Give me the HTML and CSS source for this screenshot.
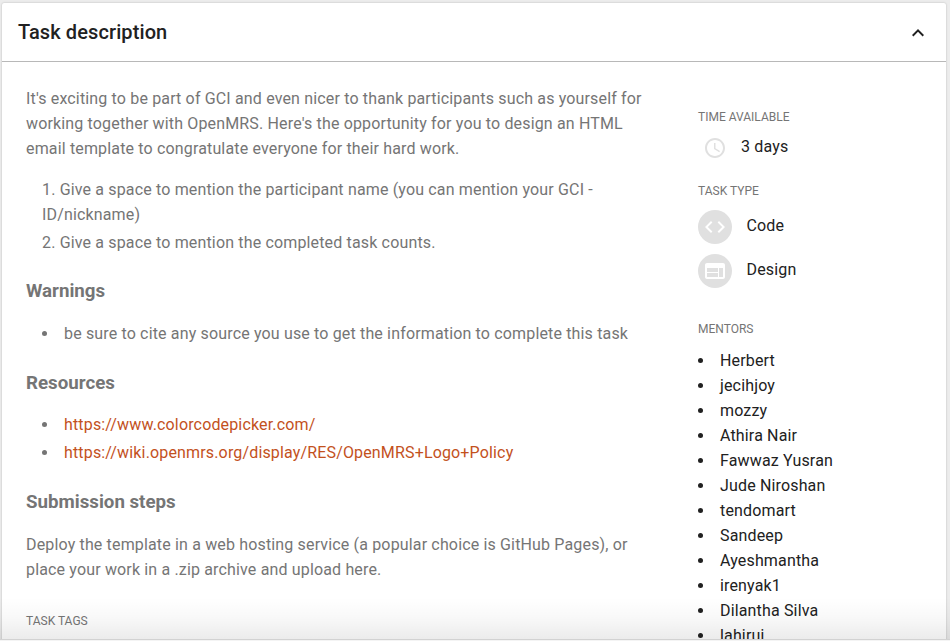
FILE: index.html
```html
<!DOCTYPE html>
<html lang="en">
<head>
<meta charset="utf-8">
<title>Task description</title>
<link rel="stylesheet" href="styles.css">
</head>
<body>
<section class="card">
  <header class="card-header">
    <h1>Task description</h1>
    <svg class="chevron" viewBox="0 0 24 24"><path d="M12 8l-6 6 1.41 1.41L12 10.83l4.59 4.58L18 14z"/></svg>
  </header>
  <div class="card-body">
    <main class="description">
      <p class="intro">It's exciting to be part of GCI and even nicer to thank participants such as yourself for<br>working together with OpenMRS. Here's the opportunity for you to design an HTML<br>email template to congratulate everyone for their hard work.</p>
      <ol class="steps">
        <li>Give a space to mention the participant name (you can mention your GCI -<br>ID/nickname)</li>
        <li>Give a space to mention the completed task counts.</li>
      </ol>
      <h2>Warnings</h2>
      <ul class="bullets">
        <li>be sure to cite any source you use to get the information to complete this task</li>
      </ul>
      <h2 class="resources">Resources</h2>
      <ul class="bullets">
        <li><a href="#">https://www.colorcodepicker.com/</a></li>
        <li><a href="#">https://wiki.openmrs.org/display/RES/OpenMRS+Logo+Policy</a></li>
      </ul>
      <h2 class="submission">Submission steps</h2>
      <p>Deploy the template in a web hosting service (a popular choice is GitHub Pages), or<br>place your work in a .zip archive and upload here.</p>
      <h3 class="label tags">TASK TAGS</h3>
    </main>
    <aside class="details">
      <h3 class="label">TIME AVAILABLE</h3>
      <div class="time">
        <svg class="clock" viewBox="0 0 24 24"><path d="M11.99 2C6.47 2 2 6.48 2 12s4.47 10 9.99 10C17.52 22 22 17.52 22 12S17.52 2 11.99 2zM12 20c-4.42 0-8-3.58-8-8s3.58-8 8-8 8 3.58 8 8-3.58 8-8 8zM12.5 7H11v6l5.25 3.15.75-1.23-4.5-2.67z"/></svg>
        <span class="name">3 days</span>
      </div>
      <h3 class="label">TASK TYPE</h3>
      <div class="type">
        <span class="badge"><svg viewBox="0 0 24 24"><path d="M9.4 16.6L4.8 12l4.6-4.6L8 6l-6 6 6 6 1.4-1.4zm5.2 0l4.6-4.6-4.6-4.6L16 6l6 6-6 6-1.4-1.4z"/></svg></span>
        <span class="name">Code</span>
      </div>
      <div class="type">
        <span class="badge"><svg viewBox="0 0 24 24"><path d="M20 4H4c-1.1 0-1.99.9-1.99 2L2 18c0 1.1.9 2 2 2h16c1.1 0 2-.9 2-2V6c0-1.1-.9-2-2-2zm-5 14H4v-4h11v4zm0-5H4V9h11v4zm5 5h-4V9h4v9z"/></svg></span>
        <span class="name">Design</span>
      </div>
      <h3 class="label mentors-label">MENTORS</h3>
      <ul class="mentors">
        <li>Herbert</li>
        <li>jecihjoy</li>
        <li>mozzy</li>
        <li>Athira Nair</li>
        <li>Fawwaz Yusran</li>
        <li>Jude Niroshan</li>
        <li>tendomart</li>
        <li>Sandeep</li>
        <li>Ayeshmantha</li>
        <li>irenyak1</li>
        <li>Dilantha Silva</li>
        <li>lahiruj</li>
      </ul>
    </aside>
  </div>
</section>
<div class="fade"></div>
</body>
</html>
```

FILE: styles.css
```css
* { box-sizing: border-box; }
body {
  position: relative;
  margin: 0;
  height: 641px;
  overflow: hidden;
  padding: 3px 4px 0 2px;
  background: #ececec;
  color: #212121;
  font: 16px/25px Roboto, sans-serif;
  letter-spacing: 0.155px;
}
h1, h2, h3, p, ul, ol { margin: 0; padding: 0; }
ul, ol { list-style: none; }
.card {
  height: 638px;
  overflow: hidden;
  background: #fff;
  border-radius: 2px 2px 0 0;
  box-shadow: 0 0 2px rgba(0, 0, 0, 0.25);
}
.card-header {
  height: 59px;
  display: flex;
  align-items: center;
  justify-content: space-between;
  padding: 0 16px;
  border-bottom: 1px solid #b8b8b8;
}
h1 { font-size: 20px; font-weight: 500; letter-spacing: 0.1px; }
.chevron { width: 24px; height: 24px; margin-top: 2px; fill: #212121; }
.card-body { display: flex; }
.description { width: 672px; padding: 24px 0 0 24px; color: #757575; white-space: nowrap; }
.steps { padding-left: 16px; margin-top: 16px; list-style: decimal inside; }
.steps li + li { margin-top: 3px; }
h2 { font-size: 18.72px; line-height: 24px; font-weight: 700; letter-spacing: 0; margin: 24px 0 18px; }
.resources { margin: 25px 0 17px; }
.submission { margin: 25px 0 18px; }
.bullets { padding-left: 16px; }
.bullets li + li { margin-top: 3px; }
.bullets li, .mentors li { display: flex; align-items: center; }
.bullets li::before, .mentors li::before {
  content: "";
  width: 5px;
  height: 5px;
  margin-right: 17px;
  border-radius: 50%;
  background: currentColor;
}
a { color: #c3511d; text-decoration: none; }
.label { font-size: 12px; line-height: 16px; font-weight: 400; letter-spacing: 0; color: #757575; }
.tags { margin-top: 31px; }
.details { flex: 1; padding: 47px 0 0 24px; }
.time { display: flex; align-items: center; height: 30px; gap: 14px; padding-left: 5px; margin: 8px 0 20px; }
.clock { width: 24px; height: 24px; fill: #e0e0e0; }
.name { margin-top: -4px; }
.type { display: flex; align-items: center; gap: 14.5px; height: 34px; margin-top: 10px; }
.label + .type { margin-top: 11px; }
.badge { width: 34px; height: 34px; border-radius: 50%; background: #e0e0e0; display: flex; align-items: center; justify-content: center; }
.badge svg { width: 24px; height: 24px; fill: #fff; }
.mentors-label { margin-top: 33px; }
.mentors { margin-top: 11px; }
.fade {
  position: absolute;
  left: 0;
  right: 0;
  bottom: 0;
  height: 44px;
  border-bottom: 1px solid #f4f4f4;
  box-shadow: inset 0 -1px #d2d2d2;
  background: linear-gradient(rgba(0, 0, 0, 0), rgba(0, 0, 0, 0.025) 45%, rgba(0, 0, 0, 0.08));
  pointer-events: none;
}
```
